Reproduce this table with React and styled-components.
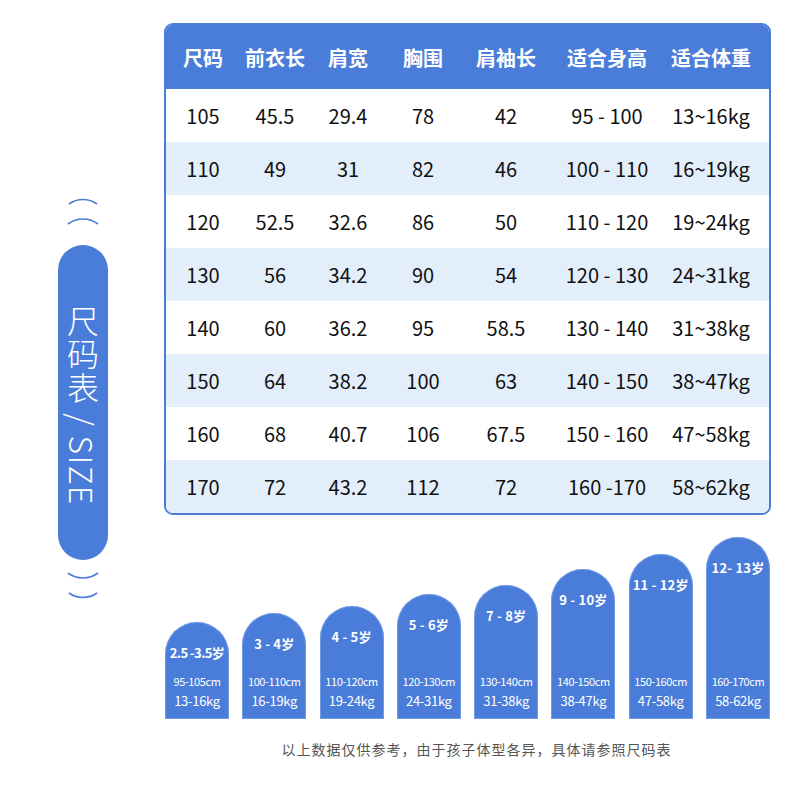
import React from "react";
import styled, { createGlobalStyle } from "styled-components";

const Global = createGlobalStyle`
  html, body { margin: 0; padding: 0; background: #ffffff; }
  body { font-family: "Noto Sans CJK SC", "Noto Sans", sans-serif; }
`;

const BLUE = "#4a7dd9";

const Page = styled.div`
  width: 800px;
  height: 800px;
  display: flex;
  align-items: flex-start;
  padding-top: 23px;
  box-sizing: border-box;
`;

const SideCol = styled.div`
  margin-left: 58px;
  width: 50px;
  padding-top: 170px;
  display: flex;
  flex-direction: column;
  align-items: center;
`;

const Arcs = styled.svg`
  display: block;
  width: 38px;
  height: 34px;
  margin-bottom: ${(p) => p.$mb || 0}px;
  margin-top: ${(p) => p.$mt || 0}px;
`;

const Pill = styled.div`
  width: 50px;
  height: 315px;
  border-radius: 25px;
  background: ${BLUE};
  display: flex;
  align-items: center;
  justify-content: center;
`;

const PillText = styled.div`
  writing-mode: vertical-rl;
  color: #ffffff;
  font-family: "Noto Sans CJK SC", "Noto Sans", sans-serif;
  font-weight: 300;
  font-size: 32px;
  line-height: 1;
  letter-spacing: 1.3px;
  margin-top: 6px;
`;

const MainCol = styled.div`
  margin-left: 56px;
  width: 607px;
  display: flex;
  flex-direction: column;
`;

const Table = styled.div`
  border: 2px solid ${BLUE};
  border-radius: 9px;
  overflow: hidden;
  background: #ffffff;
`;

const Row = styled.div`
  display: grid;
  grid-template-columns: 74px 70px 76px 74px 92px 110px 98px;
  padding-right: 9px;
  height: ${(p) => (p.$head ? 64 : 53)}px;
  align-items: center;
  background: ${(p) => (p.$head ? BLUE : p.$alt ? "#e3eefb" : "#ffffff")};
`;

const Cell = styled.div`
  text-align: center;
  font-family: "Noto Sans CJK SC", "Noto Sans", sans-serif;
  font-size: 20px;
  white-space: nowrap;
  color: ${(p) => (p.$head ? "#ffffff" : "#111111")};
  font-weight: ${(p) => (p.$head ? 700 : 400)};
`;

const BarsRow = styled.div`
  height: 204px;
  display: flex;
  align-items: flex-end;
  justify-content: space-between;
  padding: 0 1px 0 1px;
`;

const Bar = styled.div`
  width: 64px;
  border-radius: 32px 32px 0 0;
  background: ${BLUE};
  box-shadow: inset 0 0 0 1px rgba(140, 175, 235, 0.6);
  display: flex;
  flex-direction: column;
  align-items: center;
  color: #ffffff;
  box-sizing: border-box;
  padding-top: 23px;
  padding-bottom: 8px;
`;

const Age = styled.div`
  font-family: "Noto Sans CJK SC", "Noto Sans", sans-serif;
  font-weight: 700;
  font-size: 13px;
  line-height: 16px;
  white-space: nowrap;
  letter-spacing: ${(p) => (p.$tight ? -0.6 : 0.2)}px;
`;

const Info = styled.div`
  margin-top: auto;
  display: flex;
  flex-direction: column;
  align-items: center;
  font-family: "Noto Sans CJK SC", "Noto Sans", sans-serif;
`;

const Cm = styled.div`
  font-size: 11px;
  line-height: 20px;
  letter-spacing: -0.4px;
  white-space: nowrap;
`;

const Kg = styled.div`
  font-size: 13px;
  line-height: 20px;
  letter-spacing: -0.3px;
  white-space: nowrap;
`;

const Footer = styled.div`
  margin-top: 20px;
  padding-left: 18px;
  text-align: center;
  font-family: "Noto Sans CJK SC", "Noto Sans", sans-serif;
  font-size: 14px;
  line-height: 20px;
  letter-spacing: 1px;
  color: #555555;
`;

const headers = ["尺码", "前衣长", "肩宽", "胸围", "肩袖长", "适合身高", "适合体重"];
const rows = [
  ["105", "45.5", "29.4", "78", "42", "95 - 100", "13~16kg"],
  ["110", "49", "31", "82", "46", "100 - 110", "16~19kg"],
  ["120", "52.5", "32.6", "86", "50", "110 - 120", "19~24kg"],
  ["130", "56", "34.2", "90", "54", "120 - 130", "24~31kg"],
  ["140", "60", "36.2", "95", "58.5", "130 - 140", "31~38kg"],
  ["150", "64", "38.2", "100", "63", "140 - 150", "38~47kg"],
  ["160", "68", "40.7", "106", "67.5", "150 - 160", "47~58kg"],
  ["170", "72", "43.2", "112", "72", "160 -170", "58~62kg"],
];

const bars = [
  { age: "2.5 -3.5岁", cm: "95-105cm", kg: "13-16kg", h: 97, tight: true },
  { age: "3 - 4岁", cm: "100-110cm", kg: "16-19kg", h: 106 },
  { age: "4 - 5岁", cm: "110-120cm", kg: "19-24kg", h: 113 },
  { age: "5 - 6岁", cm: "120-130cm", kg: "24-31kg", h: 125 },
  { age: "7 - 8岁", cm: "130-140cm", kg: "31-38kg", h: 134 },
  { age: "9 - 10岁", cm: "140-150cm", kg: "38-47kg", h: 150 },
  { age: "11 - 12岁", cm: "150-160cm", kg: "47-58kg", h: 165 },
  { age: "12- 13岁", cm: "160-170cm", kg: "58-62kg", h: 182 },
];

const TopArcs = (props) => (
  <Arcs viewBox="0 0 38 34" {...props}>
    <path d="M5 11 A 24 24 0 0 1 33 11" fill="none" stroke={BLUE} strokeWidth="1.6" />
    <path d="M4 31 A 25 25 0 0 1 34 31" fill="none" stroke={BLUE} strokeWidth="1.6" />
  </Arcs>
);

const BottomArcs = (props) => (
  <Arcs viewBox="0 0 38 34" {...props}>
    <path d="M4 3 A 25 25 0 0 0 34 3" fill="none" stroke={BLUE} strokeWidth="1.6" />
    <path d="M5 23 A 24 24 0 0 0 33 23" fill="none" stroke={BLUE} strokeWidth="1.6" />
  </Arcs>
);

export default function App() {
  return (
    <>
      <Global />
      <Page>
        <SideCol>
          <TopArcs $mb={18} />
          <Pill>
            <PillText>尺码表 / SIZE</PillText>
          </Pill>
          <BottomArcs $mt={10} />
        </SideCol>
        <MainCol>
          <Table>
            <Row $head>
              {headers.map((h) => (
                <Cell $head key={h}>{h}</Cell>
              ))}
            </Row>
            {rows.map((r, i) => (
              <Row key={r[0]} $alt={i % 2 === 1}>
                {r.map((c, j) => (
                  <Cell key={j}>{c}</Cell>
                ))}
              </Row>
            ))}
          </Table>
          <BarsRow>
            {bars.map((b) => (
              <Bar key={b.cm} style={{ height: b.h }}>
                <Age $tight={b.tight}>{b.age}</Age>
                <Info>
                  <Cm>{b.cm}</Cm>
                  <Kg>{b.kg}</Kg>
                </Info>
              </Bar>
            ))}
          </BarsRow>
          <Footer>以上数据仅供参考，由于孩子体型各异，具体请参照尺码表</Footer>
        </MainCol>
      </Page>
    </>
  );
}
